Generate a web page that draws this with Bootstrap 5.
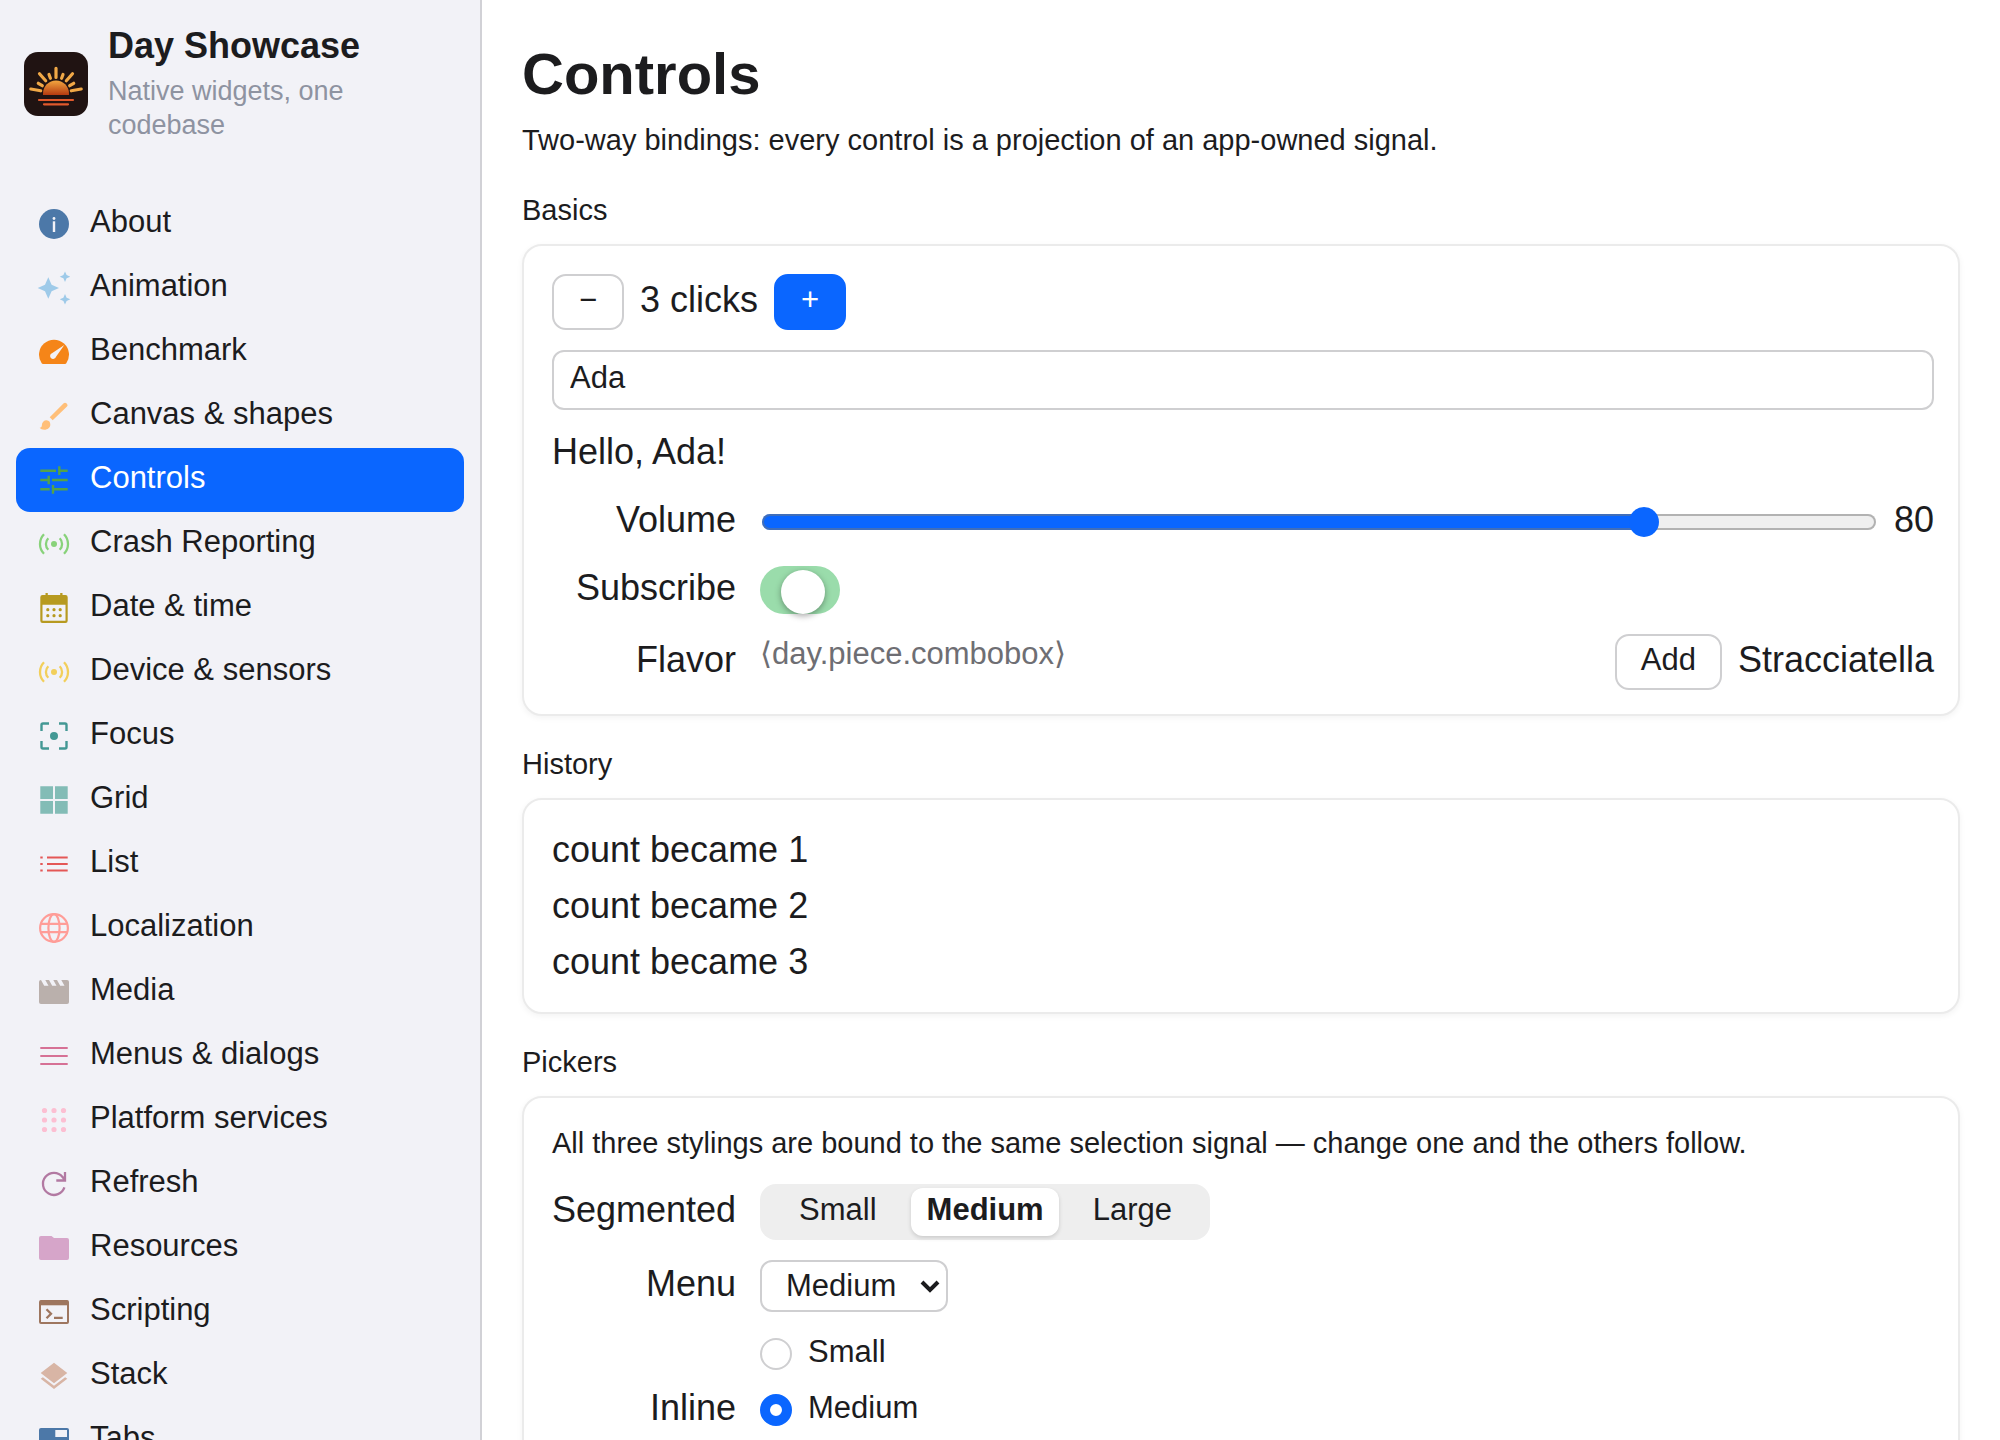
<!DOCTYPE html>
<html lang="en">
<head>
<meta charset="utf-8">
<meta name="viewport" content="width=device-width, initial-scale=1">
<title>Day Showcase – Controls</title>
<link href="https://cdn.jsdelivr.net/npm/bootstrap@5.3.0/dist/css/bootstrap.min.css" rel="stylesheet">
<style>
  :root { --ink: #1c1c1e; --accent: #0a66ff; --line: #cfcfd1; }
  body { font-family: "Liberation Sans", Arial, sans-serif; font-size: 36px; line-height: 44px; color: var(--ink); background: #fff; }
  .side { flex: 0 0 482px; background: #f2f2f7; border-right: 2px solid #d1d1d6; scrollbar-width: none; }
  .pane { padding: 40px; min-width: 0; scrollbar-width: none; }
  .side::-webkit-scrollbar, .pane::-webkit-scrollbar { display: none; }
  .brand { padding: 24px 24px 0; gap: 20px; margin-bottom: 48px; }
  .brand-name { font-size: 36px; line-height: 44px; font-weight: 700; padding-bottom: 4px; }
  .brand-sub { font-size: 27px; line-height: 34px; color: #8e93a1; padding: 2px 0; }
  .side .nav-link { height: 64px; padding: 0 20px; gap: 18px; border-radius: 14px; color: var(--ink); font-size: 31px; line-height: 36px; }
  .side .nav-link.active { background: var(--accent); color: #fff; }
  .side .nav-link span { padding-bottom: 5px; }
  .ico { width: 36px; height: 36px; flex: none; }
  .page-title { font-size: 58px; line-height: 68px; font-weight: 700; margin-bottom: 14px; }
  .note { font-size: 29px; line-height: 36px; margin: 0; }
  .panel .note { line-height: 34px; padding-bottom: 4px; }
  .group-title { font-size: 29px; line-height: 36px; font-weight: 400; margin: 30px 0 16px; }
  .note + section .group-title { margin-top: 34px; }
  .panel { border: 2px solid #ebebeb; border-radius: 20px; padding: 28px 24px 24px 28px; gap: 20px; background: #fff; box-shadow: 0 2px 6px rgba(0,0,0,.05); }
  .txt { padding-bottom: 4px; }
  .field { display: flex; align-items: center; gap: 24px; min-height: 48px; }
  .field-label { flex: 0 0 184px; text-align: right; padding-bottom: 4px; white-space: nowrap; }
  .g16 { gap: 16px; }
  .ctl { height: 56px; min-width: 72px; padding: 0 24px 5px; border: 2px solid var(--line); border-radius: 14px; font-size: 31px; line-height: 36px; color: var(--ink); background: #fff; }
  .ctl-accent { border-color: var(--accent); background: var(--accent); color: #fff; }
  .entry { height: 60px; padding: 0 16px 5px; border: 2px solid var(--line); border-radius: 12px; font-size: 31px; line-height: 36px; color: var(--ink); }
  .slide { height: 30px; appearance: none; -webkit-appearance: none; background: none; padding: 0 2px; margin: 0; }
  .slide::-webkit-slider-runnable-track { height: 16px; border-radius: 8px; box-shadow: inset 0 0 0 2px rgba(118,118,118,.5);
    background: linear-gradient(to right, var(--accent) 80%, #efefef 80%); }
  .slide::-webkit-slider-thumb { appearance: none; -webkit-appearance: none; width: 30px; height: 30px; margin-top: -7px; border: 0; border-radius: 50%; background: var(--accent); box-shadow: none; }
  .toggle.form-check-input, .toggle.form-check-input:checked { width: 80px; height: 48px; margin: 0; padding: 4px 0 0 21px; border: 0; border-radius: 24px; background: #9adcab; float: none; flex: none; }
  .toggle::before { content: ""; display: block; width: 44px; height: 44px; border-radius: 50%; background: #fff; box-shadow: 0 2px 6px rgba(0,0,0,.35); }
  .combo { font-size: 31px; line-height: 40px; color: #6e6e73; }
  .seg { display: grid; grid-template-columns: repeat(3, 1fr); width: 450px; padding: 4px; background: #eee; border-radius: 16px; }
  .seg button { height: 48px; padding: 0 0 5px; border: 0; border-radius: 12px; background: none; color: var(--ink); font-size: 31px; line-height: 36px; }
  .seg button.active { background: #fff; font-weight: 700; box-shadow: 0 2px 4px rgba(0,0,0,.15); }
  .pick { width: 188px; height: 52px; padding: 0 40px 0 24px; border: 2px solid var(--line); border-radius: 12px; font-size: 31px; line-height: 36px; color: var(--ink);
    background: #fff url("data:image/svg+xml,%3Csvg xmlns='http://www.w3.org/2000/svg' viewBox='0 0 20 14'%3E%3Cpath d='M2 3l8 8 8-8' fill='none' stroke='%231c1c1e' stroke-width='4'/%3E%3C/svg%3E") no-repeat right 6px center / 20px 14px; }
  .opts { gap: 12px; }
  .opt { height: 44px; gap: 16px; font-size: 31px; line-height: 36px; }
  .opt .form-check-input { width: 32px; height: 32px; margin: 0; border: 2px solid var(--line); background: #fff; flex: none; }
  .opt .form-check-input:checked { border: 10px solid var(--accent); background: #fff; }
  .opt label { padding-bottom: 5px; }
  .history { gap: 8px; }
</style>
<script src="https://cdn.jsdelivr.net/npm/bootstrap@5.3.0/dist/js/bootstrap.bundle.min.js"></script>
</head>
<body>
<div class="d-flex vh-100 overflow-hidden">
  <aside class="side overflow-auto">
    <div class="brand d-flex align-items-center">
      <svg width="64" height="64" viewBox="0 0 64 64" class="flex-shrink-0" aria-hidden="true">
        <defs><linearGradient id="sun" x1="0" y1="0" x2="0" y2="1"><stop offset="0" stop-color="#f2a640"/><stop offset="1" stop-color="#b53a10"/></linearGradient></defs>
        <rect width="64" height="64" rx="14" fill="#201312"/>
        <path d="M19 43V41.500a13 13 0 0 1 26 0V43z" fill="url(#sun)"/>
        <g stroke="#f0a847" stroke-width="3.200" stroke-linecap="round">
          <path d="M32 16.300V25.500M15.500 21.800 21.700 28.800M48.500 21.800 42.300 28.800M25 22.500 26.400 26.300M39 22.500 37.600 26.300M14.300 31.300 18.300 33.700M49.700 31.300 45.700 33.700M6.800 37 16.700 38.800M57.200 37 47.300 38.800"/>
        </g>
        <path d="M15 48H49M20 52.300H44" stroke="#e0592c" stroke-width="2.200" stroke-linecap="round"/>
      </svg>
      <div>
        <div class="brand-name">Day Showcase</div>
        <div class="brand-sub">Native widgets, one codebase</div>
      </div>
    </div>
    <nav class="nav nav-pills flex-column flex-nowrap px-3">
      <a href="#" class="nav-link d-flex align-items-center"><svg class="ico" viewBox="0 0 36 36"><circle cx="18" cy="18" r="15" fill="#4c78a8"/><circle cx="18" cy="12.500" r="1.400" fill="#f2f2f7"/><path d="M16.800 15.300h2.400V26h-2.400z" fill="#f2f2f7"/></svg><span>About</span></a>
      <a href="#" class="nav-link d-flex align-items-center"><svg class="ico" viewBox="0 0 36 36" fill="#9ecae9"><path d="M12.300 7.300 15.600 14.700 23 18 15.600 21.300 12.300 28.700 9 21.300 1.700 18 9 14.700zM29 1.400 30.600 5.100 34.300 6.700 30.600 8.300 29 12 27.400 8.300 23.700 6.700 27.400 5.100zM29 24 30.600 27.700 34.300 29.300 30.600 30.900 29 34.600 27.400 30.900 23.700 29.300 27.400 27.700z"/></svg><span>Animation</span></a>
      <a href="#" class="nav-link d-flex align-items-center"><svg class="ico" viewBox="0 0 36 36"><path d="M7 30Q6.200 30 5.700 29.300A15 15 0 1 1 30.300 29.300Q29.800 30 29 30z" fill="#f58518"/><path d="M28.300 11 20 22.700A3 3 0 1 1 16 19.200z" fill="#f2f2f7"/></svg><span>Benchmark</span></a>
      <a href="#" class="nav-link d-flex align-items-center"><svg class="ico" viewBox="0 0 36 36" fill="#ffbf79"><path d="M10.500 22.300a4.300 4.300 0 0 1 3.800 4.400c0 2.800-2.600 5-6 5-2 0-3.800-.9-4.600-2 1.200.1 2.200-.8 2.200-2.700a4.600 4.600 0 0 1 4.600-4.700zM13.700 19.300 27.700 5.300q1.300-1.200 2.700 0l.6.600q1.300 1.300 0 2.700L16.700 22.300z"/></svg><span>Canvas &amp; shapes</span></a>
      <a href="#" class="nav-link active d-flex align-items-center" aria-current="page"><svg class="ico" viewBox="0 0 36 36" fill="none" stroke="#54a24b" stroke-width="2.400"><path d="M4.300 8.700H20M23.300 4.300V13M23.300 8.700h8.400M4.300 18h8.400M12.700 13.700V22.300M16 18h15.700M4.300 27.300h9.400M17 23v8.700M17 27.300h14.700"/></svg><span>Controls</span></a>
      <a href="#" class="nav-link d-flex align-items-center"><svg class="ico" viewBox="0 0 36 36" fill="none" stroke="#88d27a" stroke-width="2.300"><circle cx="18" cy="18" r="3" fill="#88d27a" stroke="none"/><path d="M8 8.200a14 14 0 0 0 0 19.600M28 8.200a14 14 0 0 1 0 19.600M12.300 12.300a8 8 0 0 0 0 11.400M23.700 12.300a8 8 0 0 1 0 11.400"/></svg><span>Crash Reporting</span></a>
      <a href="#" class="nav-link d-flex align-items-center"><svg class="ico" viewBox="0 0 36 36" fill="#b79a20"><path fill-rule="evenodd" d="M9.500 3h2.300v2h12.400V3h2.300v2h3q2.200 0 2.200 2.200v23.600q0 2.200-2.200 2.200h-23q-2.200 0-2.200-2.200V7.200Q4.300 5 6.500 5h3zM6.500 14.800V30.800h23v-16z"/><circle cx="11.800" cy="19.700" r="1.600"/><circle cx="18" cy="19.700" r="1.600"/><circle cx="24.200" cy="19.700" r="1.600"/><circle cx="11.800" cy="25.700" r="1.600"/><circle cx="18" cy="25.700" r="1.600"/><circle cx="24.200" cy="25.700" r="1.600"/></svg><span>Date &amp; time</span></a>
      <a href="#" class="nav-link d-flex align-items-center"><svg class="ico" viewBox="0 0 36 36" fill="none" stroke="#f2cf5b" stroke-width="2.300"><circle cx="18" cy="18" r="3" fill="#f2cf5b" stroke="none"/><path d="M8 8.200a14 14 0 0 0 0 19.600M28 8.200a14 14 0 0 1 0 19.600M12.300 12.300a8 8 0 0 0 0 11.400M23.700 12.300a8 8 0 0 1 0 11.400"/></svg><span>Device &amp; sensors</span></a>
      <a href="#" class="nav-link d-flex align-items-center"><svg class="ico" viewBox="0 0 36 36" fill="none" stroke="#439894" stroke-width="2.400"><circle cx="18" cy="18" r="4" fill="#439894" stroke="none"/><path d="M5.500 13V7Q5.500 5.500 7 5.500h6M23 5.500h6q1.500 0 1.500 1.500v6M30.500 23v6q0 1.500-1.500 1.500h-6M13 30.500H7Q5.500 30.500 5.500 29v-6"/></svg><span>Focus</span></a>
      <a href="#" class="nav-link d-flex align-items-center"><svg class="ico" viewBox="0 0 36 36" fill="#83bcb6"><path d="M4.300 4.300H17V17H4.300zM19 4.300h12.700V17H19zM4.300 19H17v12.700H4.300zM19 19h12.700v12.700H19z"/></svg><span>Grid</span></a>
      <a href="#" class="nav-link d-flex align-items-center"><svg class="ico" viewBox="0 0 36 36" stroke="#e45756" stroke-width="2.200"><path d="M4.300 11.500h2.400M4.300 18h2.400M4.300 24.500h2.400M11 11.500h20.700M11 18h20.700M11 24.500h20.700"/></svg><span>List</span></a>
      <a href="#" class="nav-link d-flex align-items-center"><svg class="ico" viewBox="0 0 36 36" fill="none" stroke="#ff9d98" stroke-width="2.200"><circle cx="18" cy="18" r="13.900"/><ellipse cx="18" cy="18" rx="5.600" ry="13.900"/><path d="M4.800 13.800h26.400M4.800 22.200h26.400"/></svg><span>Localization</span></a>
      <a href="#" class="nav-link d-flex align-items-center"><svg class="ico" viewBox="0 0 36 36"><rect x="3" y="6" width="30" height="24" rx="2" fill="#bab0ac"/><path d="M5 6h4.300l3.200 5.800H8.200zM13 6h4.300l3.200 5.800h-4.300zM21 6h4.300l3.200 5.800h-4.300z" fill="#f2f2f7"/></svg><span>Media</span></a>
      <a href="#" class="nav-link d-flex align-items-center"><svg class="ico" viewBox="0 0 36 36" stroke="#d67195" stroke-width="2.200"><path d="M4.300 10h27.400M4.300 18h27.400M4.300 26h27.400"/></svg><span>Menus &amp; dialogs</span></a>
      <a href="#" class="nav-link d-flex align-items-center"><svg class="ico" viewBox="0 0 36 36" stroke="#fcbfd2" stroke-width="5.200" stroke-linecap="round"><path d="M8.500 8.500h.01M18 8.500h.01M27.500 8.500h.01M8.500 18h.01M18 18h.01M27.500 18h.01M8.500 27.500h.01M18 27.500h.01M27.500 27.500h.01"/></svg><span>Platform services</span></a>
      <a href="#" class="nav-link d-flex align-items-center"><svg class="ico" viewBox="0 0 36 36" fill="none" stroke="#b279a2" stroke-width="2.300"><path d="M28.400 21.400A11 11 0 1 1 26.500 11L29 14M29 6v8.500H20.300"/></svg><span>Refresh</span></a>
      <a href="#" class="nav-link d-flex align-items-center"><svg class="ico" viewBox="0 0 36 36" fill="#d6a5c9"><path d="M5 6h10.500L18 8h13q2 0 2 2v18q0 2-2 2H5q-2 0-2-2V8q0-2 2-2z"/></svg><span>Resources</span></a>
      <a href="#" class="nav-link d-flex align-items-center"><svg class="ico" viewBox="0 0 36 36" fill="none" stroke="#9e765f" stroke-width="2"><rect x="4" y="7" width="28" height="22" rx="1"/><path d="M4 9h28" stroke-width="4.600"/><path d="M10.500 15.200 15 19.700l-4.500 4.500M18 23.800h8.700" stroke-width="2.300"/></svg><span>Scripting</span></a>
      <a href="#" class="nav-link d-flex align-items-center"><svg class="ico" viewBox="0 0 36 36" fill="#d8b5a5"><path d="M18 4.700 31.300 15 18 25.300 4.700 15zM4.700 20.800 6.900 19.200 18 27.700 29.100 19.200 31.300 20.800 18 31z"/></svg><span>Stack</span></a>
      <a href="#" class="nav-link d-flex align-items-center"><svg class="ico" viewBox="0 0 36 36"><rect x="3" y="6" width="30" height="24" rx="2" fill="#4c78a8"/><path d="M19.300 8H31v7H19.300z" fill="#f2f2f7"/></svg><span>Tabs</span></a>
    </nav>
  </aside>

  <main class="pane flex-grow-1 overflow-auto">
    <h1 class="page-title">Controls</h1>
    <p class="note">Two-way bindings: every control is a projection of an app-owned signal.</p>

    <section>
      <h2 class="group-title">Basics</h2>
      <div class="panel d-flex flex-column">
        <div class="d-flex align-items-center g16">
          <button type="button" class="btn ctl" aria-label="Decrease">−</button>
          <span class="txt">3 clicks</span>
          <button type="button" class="btn ctl ctl-accent" aria-label="Increase">+</button>
        </div>
        <input type="text" class="form-control entry" value="Ada" aria-label="Name">
        <div class="txt">Hello, Ada!</div>
        <div class="field">
          <label class="field-label" for="volume">Volume</label>
          <div class="d-flex align-items-center flex-grow-1 g16">
            <input type="range" class="form-range slide flex-grow-1" id="volume" min="0" max="100" value="80">
            <output class="txt" for="volume">80</output>
          </div>
        </div>
        <div class="field">
          <label class="field-label" for="subscribe">Subscribe</label>
          <input type="checkbox" role="switch" class="form-check-input toggle" id="subscribe" checked>
        </div>
        <div class="field">
          <span class="field-label">Flavor</span>
          <div class="d-flex align-items-center flex-grow-1 g16">
            <span class="combo align-self-start me-auto">⟨day.piece.combobox⟩</span>
            <button type="button" class="btn ctl">Add</button>
            <span class="txt">Stracciatella</span>
          </div>
        </div>
      </div>
    </section>

    <section>
      <h2 class="group-title">History</h2>
      <ul class="panel history list-unstyled d-flex flex-column mb-0">
        <li class="txt">count became 1</li>
        <li class="txt">count became 2</li>
        <li class="txt">count became 3</li>
      </ul>
    </section>

    <section>
      <h2 class="group-title">Pickers</h2>
      <div class="panel d-flex flex-column">
        <p class="note">All three stylings are bound to the same selection signal — change one and the others follow.</p>
        <div class="field">
          <span class="field-label" id="seg-label">Segmented</span>
          <div class="seg" role="group" aria-labelledby="seg-label">
            <button type="button">Small</button>
            <button type="button" class="active" aria-pressed="true">Medium</button>
            <button type="button">Large</button>
          </div>
        </div>
        <div class="field">
          <label class="field-label" for="size-menu">Menu</label>
          <select class="form-select pick" id="size-menu"><option>Small</option><option selected>Medium</option><option>Large</option></select>
        </div>
        <div class="field">
          <span class="field-label" id="inline-label">Inline</span>
          <div class="opts d-flex flex-column" role="radiogroup" aria-labelledby="inline-label">
            <div class="opt d-flex align-items-center"><input class="form-check-input" type="radio" name="size" id="size-s"><label for="size-s">Small</label></div>
            <div class="opt d-flex align-items-center"><input class="form-check-input" type="radio" name="size" id="size-m" checked><label for="size-m">Medium</label></div>
            <div class="opt d-flex align-items-center"><input class="form-check-input" type="radio" name="size" id="size-l"><label for="size-l">Large</label></div>
          </div>
        </div>
      </div>
    </section>
  </main>
</div>
</body>
</html>
